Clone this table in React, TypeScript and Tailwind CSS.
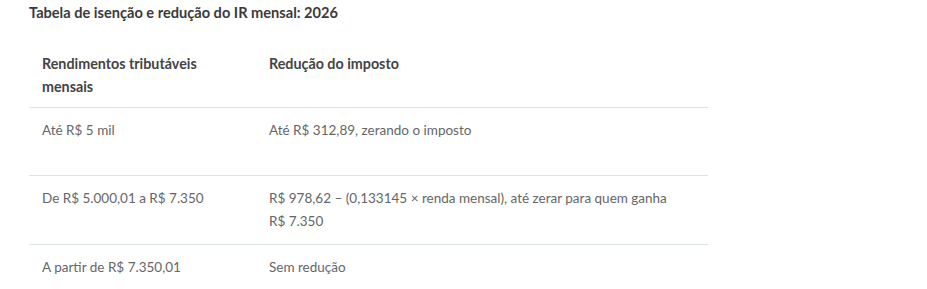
const ROWS = [
  { range: 'Até R$ 5 mil', reduction: 'Até R$ 312,89, zerando o imposto', h: 'h-[68px]' },
  {
    range: 'De R$ 5.000,01 a R$ 7.350',
    reduction: 'R$ 978,62 – (0,133145 × renda mensal), até zerar para quem ganha R$\u00a07.350',
    h: 'h-[68px]',
  },
  { range: 'A partir de R$ 7.350,01', reduction: 'Sem redução', h: 'h-[45px]' },
]

export default function App() {
  return (
    <div className="w-[927px] h-[289px] bg-white font-['Lato',sans-serif] text-[#666]">
      <div className="pl-[29px] pt-[4px]">
        <h3 className="text-[14.6px] leading-[18px] font-bold text-[#3a3a3a]">
          Tabela de isenção e redução do IR mensal: 2026
        </h3>
        <table className="mt-[19px] w-[679px] border-collapse text-[13.5px] leading-[23px]">
          <thead>
            <tr className="border-b border-[#dbe2ea] align-top">
              <th className="w-[240px] pl-[13px] pr-4 pt-[11px] pb-[9px] text-left text-[14.3px] font-bold text-[#444]">
                Rendimentos tributáveis<br />mensais
              </th>
              <th className="pt-[11px] pb-[9px] text-left text-[14.3px] font-bold text-[#444]">Redução do imposto</th>
            </tr>
          </thead>
          <tbody>
            {ROWS.map((row) => (
              <tr key={row.range} className={`border-b border-[#dbe2ea] align-top ${row.h}`}>
                <td className="pl-[13px] pr-4 py-[11px]">{row.range}</td>
                <td className="py-[11px] pr-6">{row.reduction}</td>
              </tr>
            ))}
          </tbody>
        </table>
      </div>
    </div>
  )
}
